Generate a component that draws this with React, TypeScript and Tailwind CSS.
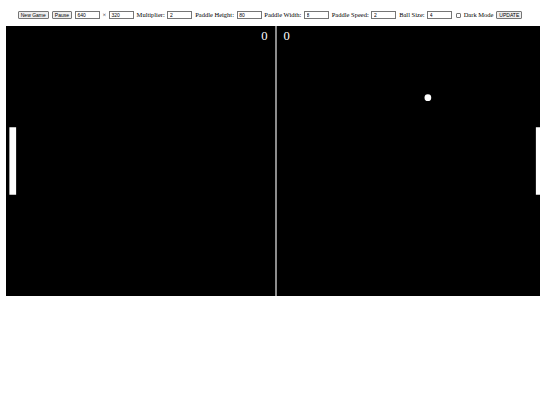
import React from "react";

const serif = { fontFamily: '"Liberation Serif", "Times New Roman", serif' };

function Btn({ label }: { label: string }) {
  return (
    <button className="h-[7.5px] px-[2.2px] bg-[#efefef] border border-[#767676] rounded-[1px] text-[5px] leading-none text-black font-['Liberation_Sans',Arial,sans-serif] flex items-center">
      {label}
    </button>
  );
}

function Field({ value }: { value: string }) {
  return (
    <input
      readOnly
      value={value}
      className="w-[25px] h-[7.5px] px-[1.5px] py-0 bg-white border border-[#767676] text-[5px] leading-[5.5px] text-black font-['Liberation_Sans',Arial,sans-serif] outline-none"
    />
  );
}

function Label({ text }: { text: string }) {
  return <span className="text-[6.5px] leading-none text-black whitespace-nowrap">{text}</span>;
}

function Controls() {
  return (
    <div className="flex items-center justify-center gap-[2.7px] h-[10px]" style={serif}>
      <Btn label="New Game" />
      <Btn label="Pause" />
      <Field value="640" />
      <Label text="×" />
      <Field value="320" />
      <Label text="Multiplier:" />
      <Field value="2" />
      <Label text="Paddle Height:" />
      <Field value="80" />
      <Label text="Paddle Width:" />
      <Field value="8" />
      <Label text="Paddle Speed:" />
      <Field value="2" />
      <Label text="Ball Size:" />
      <Field value="4" />
      <span className="w-[5px] h-[5px] border border-[#767676] rounded-[1px] bg-white ml-[1px]" />
      <Label text="Dark Mode" />
      <Btn label="UPDATE" />
    </div>
  );
}

function Court() {
  return (
    <svg width={540} height={270} viewBox="0 0 640 320" className="block shrink-0">
      <rect x={0} y={0} width={640} height={320} fill="#000" />
      <line x1={320} y1={0} x2={320} y2={320} stroke="#fff" strokeWidth={1.3} />
      <rect x={4} y={120} width={8} height={80} fill="#fff" />
      <rect x={628} y={120} width={8} height={80} fill="#fff" />
      <circle cx={500} cy={85} r={4} fill="#fff" />
      <text x={310} y={16} fill="#fff" fontSize={15} textAnchor="end" style={serif}>
        0
      </text>
      <text x={329} y={16} fill="#fff" fontSize={15} style={serif}>
        0
      </text>
    </svg>
  );
}

export default function App() {
  return (
    <div className="w-full h-[405px] overflow-hidden bg-white px-[6px] pt-[10px]">
      <Controls />
      <div className="mt-[5.5px] flex">
        <Court />
      </div>
    </div>
  );
}
